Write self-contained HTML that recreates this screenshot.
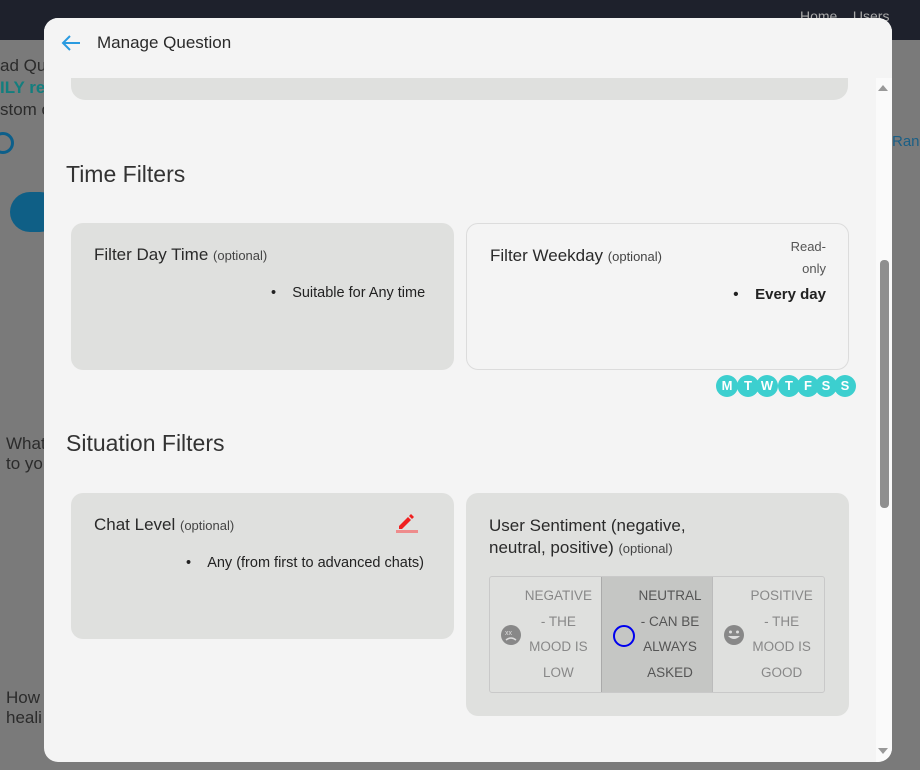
<!DOCTYPE html>
<html><head><style>
*{box-sizing:border-box;margin:0;padding:0}
body{width:920px;height:770px;overflow:hidden;background:#7a7a7a;font-family:"Liberation Sans",sans-serif;position:relative;color:#333}
.nav{position:absolute;left:0;top:0;width:920px;height:40px;background:#1e212c}
.bg{position:absolute;color:#2b2b2b;font-size:17px}
.modal{position:absolute;left:44px;top:18px;width:848px;height:744px;background:#f4f4f4;border-radius:14px;overflow:hidden}
.hdr{position:absolute;left:0;top:0;width:848px;height:60px;background:#f4f4f4;z-index:2}
.hdr .t{position:absolute;left:53px;top:15px;font-size:17px;color:#2a2a2a}
.sb{position:absolute;left:832px;top:60px;width:16px;height:684px;background:#fafafa}
.thumb{position:absolute;left:836px;top:242px;width:9px;height:248px;background:#8f8f8f;border-radius:4px}
.card{position:absolute;border-radius:12px;background:#dfe0de}
h2{position:absolute;font-size:23px;font-weight:normal;color:#333}
.ct{position:absolute;left:23px;top:22px;font-size:17px;color:#2a2a2a}
.ct small{font-size:13px;color:#444}
.li{position:absolute;font-size:14.5px;color:#222}
.day{position:absolute;top:357px;width:22px;height:22px;border-radius:50%;background:#3ccfcf;color:#fff;font-size:13px;font-weight:bold;text-align:center;line-height:22px}
.sent{position:absolute;left:23px;top:83px;width:336px;height:117px;border:1px solid #c9c9c9;border-radius:3px;display:flex}
.sent div{flex:1;position:relative;font-size:13.5px;color:#888;line-height:25.5px;text-align:center;padding-top:6px;padding-left:26px}
</style></head><body>
<div class="nav"></div>
<div class="bg" style="left:0;top:56px">ad Que</div>
<div class="bg" style="left:0;top:78px;color:#137e7e;font-weight:bold">ILY ref</div>
<div class="bg" style="left:0;top:100px">stom c</div>
<div style="position:absolute;left:-8px;top:132px;width:22px;height:22px;border:3px solid #0d5f8a;border-radius:50%"></div>
<div style="position:absolute;left:10px;top:192px;width:50px;height:40px;background:#0f5f86;border-radius:20px"></div>
<div class="bg" style="left:6px;top:434px">What<br>to yo</div>
<div class="bg" style="left:6px;top:688px">How<br>heali</div>
<div class="bg" style="left:892px;top:133px;color:#1a5f86;font-size:15px">Ranl</div>
<div class="bg" style="left:800px;top:8px;color:#aaa;font-size:14px">Home &nbsp;&nbsp; Users</div>
<div class="modal">
 <div class="hdr">
  <svg style="position:absolute;left:17px;top:16px" width="20" height="18" viewBox="0 0 20 18"><path d="M19 9H2M9 2L2 9l7 7" fill="none" stroke="#2a9be0" stroke-width="2"/></svg>
  <div class="t">Manage Question</div>
 </div>
 <div class="card" style="left:27px;top:40px;width:777px;height:42px;border-radius:0 0 14px 14px"></div>
 <h2 style="left:22px;top:143px">Time Filters</h2>
 <div class="card" style="left:27px;top:205px;width:383px;height:147px">
  <div class="ct">Filter Day Time <small>(optional)</small></div>
  <div class="li" style="left:200px;top:62px">•&nbsp;&nbsp;&nbsp;&nbsp;Suitable for Any time</div>
 </div>
 <div class="card" style="left:422px;top:205px;width:383px;height:147px;background:#f4f4f4;border:1px solid #dcdcdc">
  <div class="ct">Filter Weekday <small>(optional)</small></div>
  <div style="position:absolute;right:22px;top:12px;font-size:13px;color:#555;text-align:right;line-height:22px">Read-<br>only</div>
  <div class="li" style="right:22px;top:62px;font-weight:bold;font-size:15px">•&nbsp;&nbsp;&nbsp;&nbsp;Every day</div>
 </div>
 <div class="day" style="left:672px">M</div><div class="day" style="left:693px">T</div><div class="day" style="left:712px">W</div><div class="day" style="left:734px">T</div><div class="day" style="left:753px">F</div><div class="day" style="left:771px">S</div><div class="day" style="left:790px">S</div>
 <h2 style="left:22px;top:412px">Situation Filters</h2>
 <div class="card" style="left:27px;top:475px;width:383px;height:146px">
  <div class="ct">Chat Level <small>(optional)</small></div>
  <svg style="position:absolute;left:323px;top:17px" width="24" height="24" viewBox="0 0 24 24"><path d="M5 16l9-9 3 3-9 9H5z" fill="#f02020"/><path d="M15 6l2-2 3 3-2 2z" fill="#f02020"/><rect x="2" y="20" width="22" height="3" fill="#ee8c8c"/></svg>
  <div class="li" style="left:115px;top:62px">•&nbsp;&nbsp;&nbsp;&nbsp;Any (from first to advanced chats)</div>
 </div>
 <div class="card" style="left:422px;top:475px;width:383px;height:223px">
  <div class="ct" style="line-height:22px;top:22px">User Sentiment (negative,<br>neutral, positive) <small>(optional)</small></div>
  <div class="sent">
   <div>NEGATIVE<br>- THE<br>MOOD IS<br>LOW<svg style="position:absolute;left:10px;top:47px" width="22" height="22" viewBox="0 0 22 22"><circle cx="11" cy="11" r="10" fill="#888"/><text x="5" y="11" font-size="7" fill="#ddd">xx</text><path d="M6 16q5-4 10 0" stroke="#ddd" fill="none" stroke-width="1.5"/></svg></div>
   <div style="background:#c5c6c4;color:#555;border-left:1px solid #aaa;border-right:1px solid #bbb">NEUTRAL<br>- CAN BE<br>ALWAYS<br>ASKED<svg style="position:absolute;left:10px;top:47px" width="24" height="24"><circle cx="12" cy="12" r="10" fill="none" stroke="#0000ee" stroke-width="2"/></svg></div>
   <div>POSITIVE<br>- THE<br>MOOD IS<br>GOOD<svg style="position:absolute;left:10px;top:47px" width="22" height="22" viewBox="0 0 22 22"><circle cx="11" cy="11" r="10" fill="#888"/><circle cx="7.5" cy="8" r="1.5" fill="#ddd"/><circle cx="14.5" cy="8" r="1.5" fill="#ddd"/><path d="M5 12q6 6 12 0z" fill="#ddd"/></svg></div>
  </div>
 </div>
 <div class="sb"></div>
 <div class="thumb"></div>
 <div style="position:absolute;left:834px;top:67px;border:5px solid transparent;border-bottom:6px solid #999;border-top:0"></div>
 <div style="position:absolute;left:834px;top:730px;border:5px solid transparent;border-top:6px solid #999;border-bottom:0"></div>
</div>
</body></html>
